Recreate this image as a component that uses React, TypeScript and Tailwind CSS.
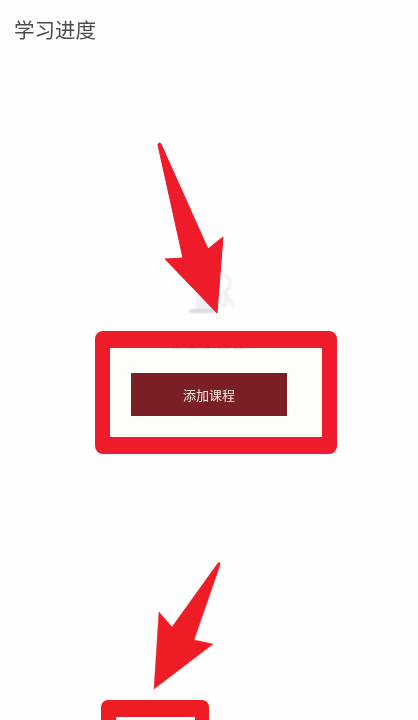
import React from 'react';

const cjk = "font-['Noto_Sans_CJK_SC','Noto_Sans',sans-serif]";

function Annotations() {
  return (
    <svg className="absolute left-0 top-0" width="418" height="720" viewBox="0 0 418 720" fill="none">
      {/* faded empty-state picture behind the first arrow */}
      <g className="blur-[0.8px]">
        <path d="M224 276c4 0 6 3 6 7 0 4-2 7-5 8" stroke="#eef0f2" strokeWidth="3" strokeLinecap="round" />
        <path d="M225 293c1 5 1 9-1 13" stroke="#eef0f2" strokeWidth="4" strokeLinecap="round" />
        <path d="M226 294l7 12" stroke="#e3e6e6" strokeWidth="1.500" strokeLinecap="round" />
        <path d="M189 311c0-1 1-2 2-2h24v4h-24c-1 0-2-1-2-2z" fill="#d6dbe0" />
        <path d="M196 296h14v13h-14z" fill="#eef0f3" />
      </g>
      <path d="M158 145c0-2 2-3 3-1l47 105 15-12-6 76-52-54 18-1-25-113z" fill="#ee1c2b" stroke="#ee1c2b" strokeWidth="1" strokeLinejoin="round" />
      <path d="M218 563c1.500-1 2.500 0 2 2l-26 75 19 4-59 45 5-77 13 15 46-64z" fill="#ee1c25" stroke="#ee1c25" strokeWidth="0.500" strokeLinejoin="round" />
      {/* clipped caption remains at the frame's inner edge */}
      <g className="blur-[0.5px]" fill="#e6e3e0">
        <rect x="172" y="348" width="10" height="1.500" />
        <rect x="186" y="348" width="12" height="1.500" />
        <rect x="202" y="348" width="7" height="1.500" />
        <rect x="217" y="348" width="12" height="1.500" />
        <rect x="233" y="348" width="13" height="1.500" />
      </g>
    </svg>
  );
}

export default function App() {
  return (
    <div className={`relative h-[720px] w-[418px] overflow-hidden bg-[#fefefe] ${cjk}`}>
      <h1 className="pl-[14px] pt-[14px] text-[20.500px] font-normal leading-[30px] text-[#4a4a4a] blur-[0.4px]">学习进度</h1>

      <div className="ml-[95px] mt-[287px] h-[123px] w-[242px] rounded-[8px] bg-[#ee1c2b] px-[15px] py-[17px]">
        <div className="h-[89px] w-[212px] bg-[#fdfdfa] pl-[21px] pt-[25px]">
          <button className="flex h-[43px] w-[156px] items-center justify-center bg-[#7a1f25] text-[13px] text-[#f6e9df] blur-[0.2px]">
            添加课程
          </button>
        </div>
      </div>

      <div className="ml-[101px] mt-[246px] h-[60px] w-[108px] rounded-[7px] bg-[#ee1c25] px-[15px] pt-[17px]">
        <div className="h-[60px] w-[79px] bg-[#fdfdfa]" />
      </div>

      <Annotations />
    </div>
  );
}
